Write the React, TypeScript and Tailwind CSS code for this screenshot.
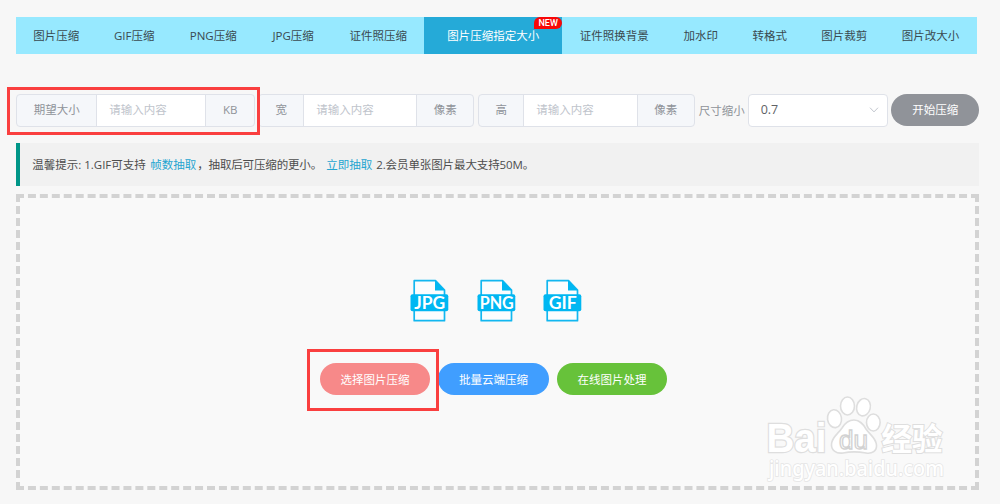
import type { ReactNode } from 'react'

interface NavItem {
  label: string
  width: string
  active?: boolean
}

const navItems: NavItem[] = [
  { label: '图片压缩', width: 'w-[80px]' },
  { label: 'GIF压缩', width: 'w-[76px]' },
  { label: 'PNG压缩', width: 'w-[82px]' },
  { label: 'JPG压缩', width: 'w-[78px]' },
  { label: '证件照压缩', width: 'w-[92px]' },
  { label: '图片压缩指定大小', width: 'w-[138px]', active: true },
  { label: '证件照换背景', width: 'w-[104px]' },
  { label: '加水印', width: 'w-[69px]' },
  { label: '转格式', width: 'w-[69px]' },
  { label: '图片裁剪', width: 'w-[80px]' },
  { label: '图片改大小', width: 'w-[92.5px]' },
]

function NavBar() {
  return (
    <nav className="flex h-[37px] w-[960.5px] bg-[#97e9ff]">
      {navItems.map((item) => (
        <a
          key={item.label}
          className={`relative flex shrink-0 items-center justify-center whitespace-nowrap ${item.width} ${
            item.active ? 'bg-[#25aad8] text-white' : 'text-[#3a4a50]'
          }`}
        >
          {item.label}
          {item.active && (
            <span className="absolute right-0 top-0 flex h-[12px] w-[28px] items-center justify-center rounded-[6px] rounded-bl-none bg-[#f80707] font-['Roboto',sans-serif] text-[9px] font-medium text-white">
              NEW
            </span>
          )}
        </a>
      ))}
    </nav>
  )
}

interface InputGroupProps {
  label: string
  unit: string
  className: string
  labelWidth: string
  unitWidth: string
}

function InputGroup({ label, unit, className, labelWidth, unitWidth }: InputGroupProps) {
  return (
    <div className={`flex h-[33px] shrink-0 overflow-hidden rounded-[4px] border border-[#dfe2e9] bg-[#f5f7fa] text-[#8f9399] ${className}`}>
      <div className={`flex shrink-0 items-center justify-center border-r border-[#dfe2e9] ${labelWidth}`}>{label}</div>
      <div className="flex flex-1 items-center bg-white pl-[12px] text-[#c0c4cc]">请输入内容</div>
      <div className={`flex shrink-0 items-center justify-center border-l border-[#dfe2e9] ${unitWidth}`}>{unit}</div>
    </div>
  )
}

function FileIcon({ type }: { type: string }) {
  return (
    <svg width="39" height="44" viewBox="0 0 39 44">
      <path d="M4.2 1.7H25.5L34.5 11V41.7H4.2Z" fill="#fbfdfe" stroke="#12b7f0" strokeWidth="1.7" strokeLinejoin="round" />
      <path d="M25 1L35 11.6H25Z" fill="#00b7f2" />
      <rect x="0.5" y="15.3" width="37.8" height="17" rx="2" fill="#00b7f2" />
      <text
        x="19.7"
        y="29.7"
        textAnchor="middle"
        textLength={type === 'GIF' ? 28 : type === 'PNG' ? 34 : 31}
        lengthAdjust="spacingAndGlyphs"
        fill="#fff"
        fontFamily="Lato, sans-serif"
        fontSize="16.5"
        fontWeight="700"
      >
        {type}
      </text>
    </svg>
  )
}

function RoundButton({ color, children }: { color: string; children: ReactNode }) {
  return (
    <button className={`flex h-[32px] w-[110.5px] items-center justify-center rounded-full pt-px text-white ${color}`}>
      {children}
    </button>
  )
}

function Watermark() {
  return (
    <svg className="absolute left-[763px] top-[392px] overflow-visible" width="190" height="104" viewBox="0 0 190 104">
      <g fill="#fff" stroke="#dedede" strokeWidth="1.6">
        <text x="3.5" y="59.500" textLength="60" lengthAdjust="spacingAndGlyphs" fontFamily="Liberation Sans, sans-serif" fontWeight="700" fontSize="40" paintOrder="stroke" strokeWidth="2.4">Bai</text>
        <ellipse cx="71.5" cy="26.7" rx="7" ry="9" transform="rotate(-8 71.5 26.7)" />
        <ellipse cx="84.5" cy="14" rx="7" ry="9" />
        <ellipse cx="100.5" cy="15.2" rx="6.8" ry="8.8" transform="rotate(14 100.5 15.2)" />
        <ellipse cx="110.3" cy="30.5" rx="6.8" ry="8.5" />
        <path d="M91 28C97 28 100 32 103 37C107 43 113 46 113.500 53C114 59 109 62 103 61C95 59.500 87 59.500 80 61C73 62 68 58 68.500 52C69 45 75 42 79 36C82 31 85 28 91 28Z" />
        <text x="76" y="56.500" textLength="29" lengthAdjust="spacingAndGlyphs" fontFamily="Liberation Sans, sans-serif" fontWeight="400" fontSize="25" stroke="#d2d2d2" strokeWidth="1.3">du</text>
        <text x="118.5" y="57.5" textLength="61" fontFamily="Noto Sans CJK SC, sans-serif" fontWeight="700" fontSize="30.500" paintOrder="stroke" strokeWidth="2">经验</text>
        <text x="6" y="84" textLength="175" lengthAdjust="spacingAndGlyphs" fontFamily="Noto Sans, sans-serif" fontSize="21.5" fontWeight="500" paintOrder="stroke" strokeWidth="1.6" stroke="#e5e5e5">jingyan.baidu.com</text>
      </g>
    </svg>
  )
}

export default function App() {
  return (
    <div className="relative h-[504px] w-[1000px] overflow-hidden bg-[#f7f7f7] pl-[16.200px] pt-[17px] font-['Open_Sans','Noto_Sans_CJK_SC',sans-serif] text-[11.500px] leading-[18px]">
      <NavBar />

      <div className="mt-[39.500px] flex h-[33px] items-center">
        <InputGroup label="期望大小" unit="KB" className="w-[239px]" labelWidth="w-[80px]" unitWidth="w-[49px]" />
        <InputGroup label="宽" unit="像素" className="ml-[3px] w-[216px]" labelWidth="w-[45px]" unitWidth="w-[57px]" />
        <InputGroup label="高" unit="像素" className="ml-[4px] w-[216.500px]" labelWidth="w-[45px]" unitWidth="w-[57px]" />
        <span className="ml-[4px] w-[49px] shrink-0 pt-px text-[#8f9399]">尺寸缩小</span>
        <div className="flex h-[33px] w-[140.500px] shrink-0 items-center justify-between rounded-[4px] border border-[#dfe2e9] bg-white pl-[12px] pr-[8px] text-[12.500px] text-[#606266]">
          0.7
          <svg width="10" height="6" viewBox="0 0 10 6" fill="none" stroke="#c0c4cc" strokeWidth="1">
            <path d="M1 0.7L5 4.900L9 0.7" />
          </svg>
        </div>
        <button className="ml-[3px] flex h-[32.500px] w-[88px] shrink-0 items-center justify-center rounded-full bg-[#909399] text-white">
          开始压缩
        </button>
      </div>

      <div className="mt-[16.500px] flex h-[43px] w-[962.500px] items-center border-l-[4.500px] border-[#009688] bg-[#f1f1f1] pl-[12px] whitespace-nowrap text-[#4d4d4d]">
        <span className="w-[118px]">温馨提示: 1.GIF可支持</span>
        <a className="w-[47px] text-[#25a5d0]">帧数抽取</a>
        <span className="w-[129px] tracking-[-0.15px]">，抽取后可压缩的更小。</span>
        <a className="w-[50px] text-[#25a5d0]">立即抽取</a>
        <span className="tracking-[-0.1px]">2.会员单张图片最大支持50M。</span>
      </div>

      <div className="mt-[8px] flex h-[296px] w-[962.500px] flex-col items-center border-4 border-dashed border-[#d3d3d3] bg-[#f9f9f9] pr-[8px] pt-[81px]">
        <div className="flex gap-[27.500px] pl-[6px]">
          <FileIcon type="JPG" />
          <FileIcon type="PNG" />
          <FileIcon type="GIF" />
        </div>
        <div className="mt-[40px] flex gap-[8px]">
          <RoundButton color="bg-[#f78989]">选择图片压缩</RoundButton>
          <RoundButton color="bg-[#409eff]">批量云端压缩</RoundButton>
          <RoundButton color="bg-[#67c23a]">在线图片处理</RoundButton>
        </div>
      </div>

      {/* 操作步骤标记 */}
      <div className="absolute left-[7px] top-[87px] h-[48px] w-[253px] border-3 border-[#fa3f3f]" />
      <div className="absolute left-[307px] top-[349px] h-[62px] w-[132px] border-3 border-[#fa3f3f]" />
      <Watermark />
    </div>
  )
}
